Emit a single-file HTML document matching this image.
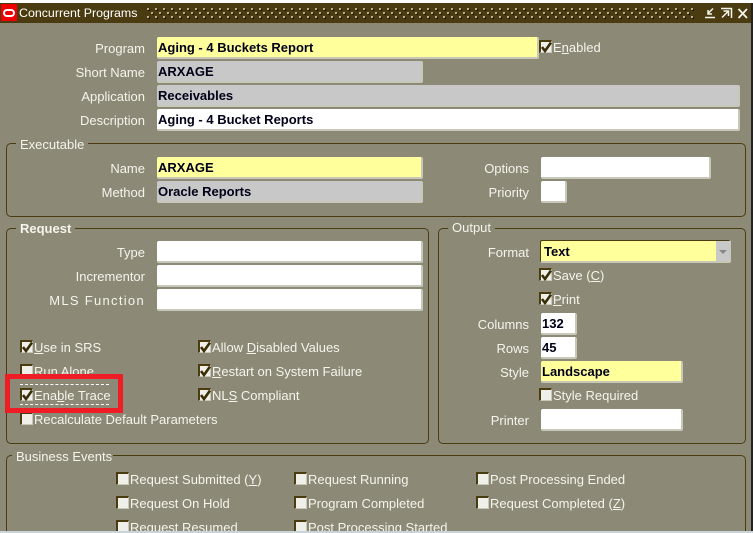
<!DOCTYPE html>
<html><head><meta charset="utf-8"><style>
html,body{margin:0;padding:0;width:753px;height:533px;overflow:hidden}
#w{left:0;top:0;width:753px;height:533px;overflow:hidden;background:#8c8a76;font-family:"Liberation Sans",sans-serif;font-size:13px;color:#f4f4ec}
div{position:absolute;box-sizing:border-box}
.l{text-align:right;white-space:nowrap;height:20px;line-height:20px;width:140px}
.t{white-space:nowrap;height:20px;line-height:20px}
.f{height:22px;border-right:2px solid #c8c8b8;border-bottom:2px solid #c8c8b8;border-radius:2px;background:#fff;color:#000018;font-weight:bold;font-size:13px;line-height:22px;padding-left:1px;white-space:nowrap;overflow:hidden}
.y{background:#ffff9c}.g{background:#c8c8c8}
.c{width:13px;height:13px;background:#f0f0ea;border-top:2px solid #4a3c10;border-left:2px solid #4a3c10;border-right:1px solid #c8c8b8;border-bottom:1px solid #c8c8b8}
.c svg{position:absolute;left:0;top:0}
.b{border:1px solid #4a3c10;border-radius:5px}
.h{background:#8c8a76;padding:0 4px;height:18px;line-height:18px;white-space:nowrap}
</style></head><body><div id="w">
<div style="left:0;top:0;width:753px;height:3px;background:#fff"></div>
<div style="left:0;top:3px;width:751px;height:20px;background:#4a3c10"></div>
<div style="left:751px;top:3px;width:2px;height:530px;background:#222"></div>
<div style="left:1px;top:4px;width:16px;height:17px;background:#f00000"></div>
<div style="left:3px;top:9px;width:12px;height:8px;border:2px solid #fff;border-radius:4px"></div>
<div class="t" style="left:19px;top:4px;color:#fff;font-size:12.4px;line-height:18px">Concurrent Programs</div>
<svg style="position:absolute;left:0;top:0" width="753" height="24" fill="none">
<defs><pattern id="d" x="147" y="8" width="8" height="8" patternUnits="userSpaceOnUse"><rect x="1" y="1" width="2" height="2" fill="#1e1804"/><rect x="0" y="0" width="2" height="2" fill="#b8b090"/><rect x="5" y="5" width="2" height="2" fill="#1e1804"/><rect x="4" y="4" width="2" height="2" fill="#b8b090"/></pattern></defs>
<rect x="147" y="8" width="548" height="11" fill="url(#d)"/>
<g stroke="#f4f4ec" stroke-width="1.500"><path d="M705 17.500H715M713 8.500L708 13.500M708 10V14H712"/><path d="M721 8.500H732M731.500 8V18M722 17.500L728 11.500M723.500 11H728.500V16"/><path d="M738.500 9L747 18M747 9L738.500 18" stroke-width="1.800"/></g></svg>

<div class="l" style="left:5px;top:39px">Program</div>
<div class="l" style="left:5px;top:63px">Short Name</div>
<div class="l" style="left:5px;top:87px">Application</div>
<div class="l" style="left:5px;top:111px">Description</div>
<div class="f y" style="left:157px;top:37px;width:382px">Aging - 4 Buckets Report</div>
<div class="f g" style="left:157px;top:61px;width:266px">ARXAGE</div>
<div class="f g" style="left:157px;top:85px;width:583px">Receivables</div>
<div class="f" style="left:157px;top:109px;width:583px">Aging - 4 Bucket Reports</div>
<div class="c" style="left:539px;top:40px"><svg width="11" height="11"><path d="M1 5L4 9L10 0.500" fill="none" stroke="#3a2e08" stroke-width="2.600"/></svg></div>
<div class="t" style="left:553px;top:38px">E<u>n</u>abled</div>

<div class="b" style="left:6px;top:143px;width:740px;height:74px"></div>
<div class="h" style="left:16px;top:136px">Executable</div>
<div class="l" style="left:5px;top:159px">Name</div>
<div class="l" style="left:5px;top:183px">Method</div>
<div class="f y" style="left:157px;top:157px;width:266px">ARXAGE</div>
<div class="f g" style="left:157px;top:181px;width:266px">Oracle Reports</div>
<div class="l" style="left:389px;top:159px">Options</div>
<div class="l" style="left:389px;top:183px">Priority</div>
<div class="f" style="left:541px;top:157px;width:170px"></div>
<div class="f" style="left:541px;top:181px;width:26px"></div>

<div class="b" style="left:6px;top:228px;width:423px;height:216px"></div>
<div class="h" style="left:16px;top:220px;font-weight:bold">Request</div>
<div class="l" style="left:5px;top:243px">Type</div>
<div class="l" style="left:5px;top:267px">Incrementor</div>
<div class="l" style="left:5px;top:291px;letter-spacing:1.300px">MLS Function</div>
<div class="f" style="left:157px;top:241px;width:266px"></div>
<div class="f" style="left:157px;top:265px;width:266px"></div>
<div class="f" style="left:157px;top:289px;width:266px"></div>

<div class="c" style="left:20px;top:340px"><svg width="11" height="11"><path d="M1 5L4 9L10 0.500" fill="none" stroke="#3a2e08" stroke-width="2.600"/></svg></div>
<div class="t" style="left:34px;top:338px"><u>U</u>se in SRS</div>
<div class="c" style="left:20px;top:364px"></div>
<div class="t" style="left:34px;top:362px"><u>R</u>un Alone</div>
<div class="c" style="left:20px;top:388px"><svg width="11" height="11"><path d="M1 5L4 9L10 0.500" fill="none" stroke="#3a2e08" stroke-width="2.600"/></svg></div>
<div class="t" style="left:34px;top:386px">Ena<u>b</u>le Trace</div>
<div class="c" style="left:20px;top:412px"></div>
<div class="t" style="left:34px;top:410px">Recalculate Default Parameters</div>
<div style="left:20px;top:384px;width:89px;border-top:1px dashed #fff"></div>
<div style="left:20px;top:404px;width:89px;border-top:1px dashed #fff"></div>
<div style="left:5px;top:374px;width:118px;height:39px;border:5px solid #ee1c25"></div>

<div class="c" style="left:198px;top:340px"><svg width="11" height="11"><path d="M1 5L4 9L10 0.500" fill="none" stroke="#3a2e08" stroke-width="2.600"/></svg></div>
<div class="t" style="left:212px;top:338px">Allow <u>D</u>isabled Values</div>
<div class="c" style="left:198px;top:364px"><svg width="11" height="11"><path d="M1 5L4 9L10 0.500" fill="none" stroke="#3a2e08" stroke-width="2.600"/></svg></div>
<div class="t" style="left:212px;top:362px"><u>R</u>estart on System Failure</div>
<div class="c" style="left:198px;top:388px"><svg width="11" height="11"><path d="M1 5L4 9L10 0.500" fill="none" stroke="#3a2e08" stroke-width="2.600"/></svg></div>
<div class="t" style="left:212px;top:386px">NL<u>S</u> Compliant</div>

<div class="b" style="left:438px;top:228px;width:308px;height:216px"></div>
<div class="h" style="left:448px;top:219px">Output</div>
<div class="l" style="left:389px;top:243px">Format</div>
<div class="f y" style="left:540px;top:240px;width:191px;height:23px;border:1px solid #4a3c10;border-right:2px solid #c8c8b8;border-bottom:2px solid #c8c8b8;padding-left:3px;line-height:22px">Text</div>
<div style="left:716px;top:241px;width:14px;height:20px;background:#c8c8c8"></div>
<div style="left:719px;top:250px;width:0;height:0;border-left:4px solid transparent;border-right:4px solid transparent;border-top:4px solid #888"></div>
<div class="c" style="left:539px;top:268px"><svg width="11" height="11"><path d="M1 5L4 9L10 0.500" fill="none" stroke="#3a2e08" stroke-width="2.600"/></svg></div>
<div class="t" style="left:553px;top:266px">Save (<u>C</u>)</div>
<div class="c" style="left:539px;top:292px"><svg width="11" height="11"><path d="M1 5L4 9L10 0.500" fill="none" stroke="#3a2e08" stroke-width="2.600"/></svg></div>
<div class="t" style="left:553px;top:290px"><u>P</u>rint</div>
<div class="l" style="left:389px;top:315px">Columns</div>
<div class="l" style="left:389px;top:339px">Rows</div>
<div class="l" style="left:389px;top:363px">Style</div>
<div class="l" style="left:389px;top:411px">Printer</div>
<div class="f" style="left:541px;top:313px;width:36px">132</div>
<div class="f" style="left:541px;top:337px;width:36px">45</div>
<div class="f y" style="left:541px;top:361px;width:142px">Landscape</div>
<div class="c" style="left:539px;top:388px"></div>
<div class="t" style="left:553px;top:386px">Style Required</div>
<div class="f" style="left:541px;top:409px;width:142px"></div>

<div class="b" style="left:6px;top:455px;width:740px;height:90px"></div>
<div class="h" style="left:12px;top:448px;padding:0 1px 0 4px">Business Events</div>
<div class="c" style="left:116px;top:472px"></div><div class="t" style="left:130px;top:470px">Request Submitted (<u>Y</u>)</div>
<div class="c" style="left:116px;top:496px"></div><div class="t" style="left:130px;top:494px">Request On Hold</div>
<div class="c" style="left:116px;top:520px"></div><div class="t" style="left:130px;top:518px">Request Resumed</div>
<div class="c" style="left:294px;top:472px"></div><div class="t" style="left:308px;top:470px">Request Running</div>
<div class="c" style="left:294px;top:496px"></div><div class="t" style="left:308px;top:494px">Program Completed</div>
<div class="c" style="left:294px;top:520px"></div><div class="t" style="left:308px;top:518px">Post Processing Started</div>
<div class="c" style="left:476px;top:472px"></div><div class="t" style="left:490px;top:470px">Post Processing Ended</div>
<div class="c" style="left:476px;top:496px"></div><div class="t" style="left:490px;top:494px">Request Completed (<u>Z</u>)</div>
<div style="left:0;top:531px;width:753px;height:2px;background:#c8d4d8"></div>
</div></body></html>
